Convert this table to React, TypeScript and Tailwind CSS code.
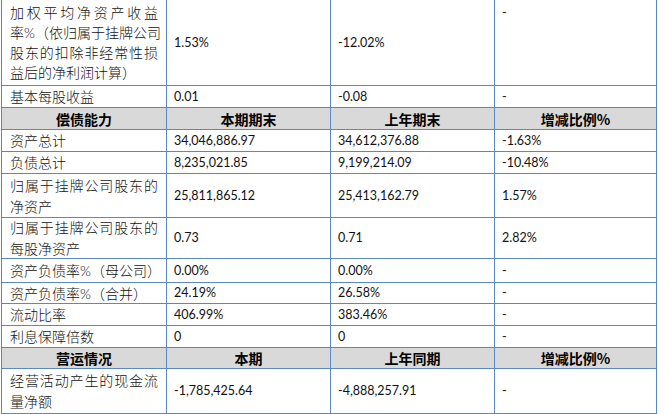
import React from "react";

type Row = { h: string; header?: boolean; cells: (string | string[])[]; topCol4?: boolean; lh?: string };

const rows: Row[] = [
  {
    h: "h-[86px]",
    lh: "leading-[20px]",
    cells: [["加权平均净资产收益", "率%（依归属于挂牌公司", "股东的扣除非经常性损", "益后的净利润计算）"], "1.53%", "-12.02%", "-"],
    topCol4: true,
  },
  { h: "h-[22px]", cells: ["基本每股收益", "0.01", "-0.08", "-"] },
  { h: "h-[22px]", header: true, cells: ["偿债能力", "本期期末", "上年期末", "增减比例%"] },
  { h: "h-[22px]", cells: ["资产总计", "34,046,886.97", "34,612,376.88", "-1.63%"] },
  { h: "h-[22px]", cells: ["负债总计", "8,235,021.85", "9,199,214.09", "-10.48%"] },
  { h: "h-[44px]", cells: [["归属于挂牌公司股东的", "净资产"], "25,811,865.12", "25,413,162.79", "1.57%"] },
  { h: "h-[41px]", cells: [["归属于挂牌公司股东的", "每股净资产"], "0.73", "0.71", "2.82%"] },
  { h: "h-[24px]", cells: [["资产负债率%（母公司）"], "0.00%", "0.00%", "-"] },
  { h: "h-[21px]", cells: ["资产负债率%（合并）", "24.19%", "26.58%", "-"] },
  { h: "h-[22px]", cells: ["流动比率", "406.99%", "383.46%", "-"] },
  { h: "h-[22px]", cells: ["利息保障倍数", "0", "0", "-"] },
  { h: "h-[21px]", header: true, cells: ["营运情况", "本期", "上年同期", "增减比例%"] },
  { h: "h-[45px]", cells: [["经营活动产生的现金流", "量净额"], "-1,785,425.64", "-4,888,257.91", "-"] },
];

const widths = ["w-[166px] border-l", "w-[164px]", "w-[164px]", "w-[162px]"];
const pads = ["pl-[8px] pr-[8px]", "pl-[7px] pr-[4px]", "pl-[7px] pr-[4px]", "pl-[7px] pr-[4px]"];

export default function App() {
  return (
    <div
      className="w-[663px] h-[414px] bg-white overflow-hidden pl-px text-[#111]"
      style={{ fontFamily: "Lato, 'Noto Sans CJK SC', sans-serif" }}
    >
      {rows.map((r, ri) => (
        <div key={ri} className="flex">
          {r.cells.map((c, ci) => {
            const base = `${widths[ci]} ${r.h} border-r border-b border-[#5b87c5] box-border flex`;
            if (r.header) {
              return (
                <div
                  key={ci}
                  className={`${base} bg-[#d9d9d9] items-center justify-center font-bold text-[14px] leading-[20px] text-black`}
                  style={{ fontFamily: "'Noto Sans CJK SC', sans-serif" }}
                >
                  {c as string}
                </div>
              );
            }
            if (ci === 0) {
              const lines = Array.isArray(c) ? c : [c];
              return (
                <div
                  key={ci}
                  className={`${base} ${pads[0]} flex-col justify-center text-[14px] font-light ${r.lh ?? "leading-[21px]"}`}
                >
                  {lines.map((l, li) => (
                    <div
                      key={li}
                      className={
                        lines.length > 1 && li < lines.length - 1
                          ? "whitespace-nowrap text-justify [text-align-last:justify]"
                          : "whitespace-nowrap"
                      }
                    >
                      {l}
                    </div>
                  ))}
                </div>
              );
            }
            const top = r.topCol4 && ci === 3;
            return (
              <div
                key={ci}
                className={`${base} ${pads[ci]} ${top ? "items-start pt-[3px]" : "items-center"} text-[12.5px] leading-[20px]`}
              >
                {c as string}
              </div>
            );
          })}
        </div>
      ))}
    </div>
  );
}
